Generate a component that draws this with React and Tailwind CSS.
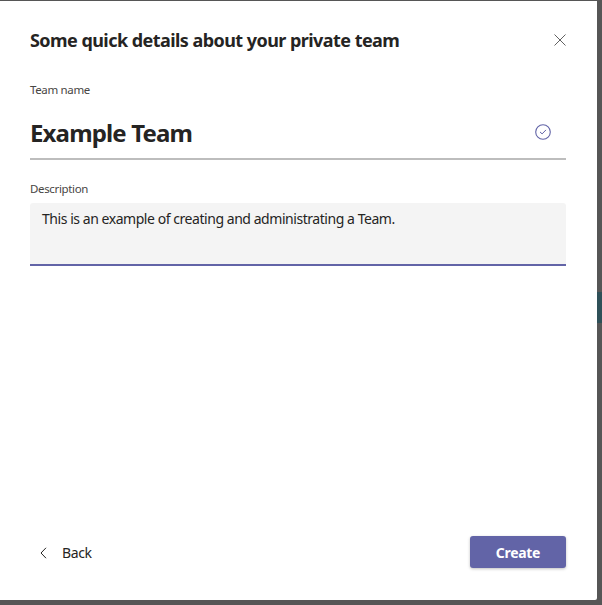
import React from "react";

function CloseIcon() {
  return (
    <svg width="12" height="12" viewBox="0 0 12 12" fill="none">
      <path d="M0.5 0.5 L11.5 11.5 M11.5 0.5 L0.5 11.5" stroke="#616161" strokeWidth="1" />
    </svg>
  );
}

function CheckCircle() {
  return (
    <svg width="16" height="16" viewBox="0 0 16 16" fill="none">
      <circle cx="8" cy="8" r="7.3" stroke="#6264a7" strokeWidth="1.1" />
      <path d="M5.3 8.2 L7.1 9.9 L10.7 6.2" stroke="#6264a7" strokeWidth="1" strokeLinecap="round" strokeLinejoin="round" />
    </svg>
  );
}

function ChevronLeft() {
  return (
    <svg width="7" height="12" viewBox="0 0 7 12" fill="none">
      <path d="M6 0.8 L1 6 L6 11.2" stroke="#252423" strokeWidth="1" />
    </svg>
  );
}

export default function App() {
  return (
    <div
      className="w-[602px] h-[605px] bg-[#565656] flex pt-[1px]"
      style={{ fontFamily: '"Noto Sans", "Open Sans", sans-serif' }}
    >
      <div className="w-[597px] h-[599px] bg-white rounded-br-[2px] flex flex-col pl-[30px] pr-[31px] pt-[27px] pb-[32px]">
        <div className="flex items-center justify-between h-6">
          <h1 className="text-[18px] leading-6 font-bold text-[#252423] tracking-[-0.55px]">
            Some quick details about your private team
          </h1>
          <CloseIcon />
        </div>

        <label className="mt-[30px] text-[11.5px] leading-4 text-[#484644] tracking-[-0.35px]">Team name</label>
        <div className="mt-[13px] flex items-start justify-between pt-[6px] pb-[9px] border-b-2 border-[#bdbdbd]">
          <span className="text-[24px] leading-8 font-bold text-[#252423] tracking-[-0.85px]">Example Team</span>
          <div className="mt-[7px] mr-[15px]">
            <CheckCircle />
          </div>
        </div>

        <label className="mt-[21px] text-[11.5px] leading-4 text-[#484644] tracking-[-0.35px]">Description</label>
        <div className="mt-[6px] h-[63px] bg-[#f4f4f4] rounded-t-[3px] border-b-2 border-[#6264a7] px-[12px] pt-[6px]">
          <p className="text-[14px] leading-5 text-[#252423] tracking-[-0.45px]">
            This is an example of creating and administrating a Team.
          </p>
        </div>

        <div className="mt-auto flex items-center justify-between">
          <button className="flex items-center gap-[15px] pl-[10px] pt-[2px] text-[14px] leading-5 text-[#252423] tracking-[-0.4px]">
            <ChevronLeft />
            <span>Back</span>
          </button>
          <button className="w-[96px] h-[32px] rounded-[3px] bg-[#6264a7] text-white text-[14px] font-bold tracking-[-0.3px] shadow-[0_1px_3px_rgba(0,0,0,0.25)]">
            Create
          </button>
        </div>
      </div>
      <div className="flex-1 flex flex-col">
        <div className="mt-[291px] h-[31px] bg-[#2f5058]" />
      </div>
    </div>
  );
}
